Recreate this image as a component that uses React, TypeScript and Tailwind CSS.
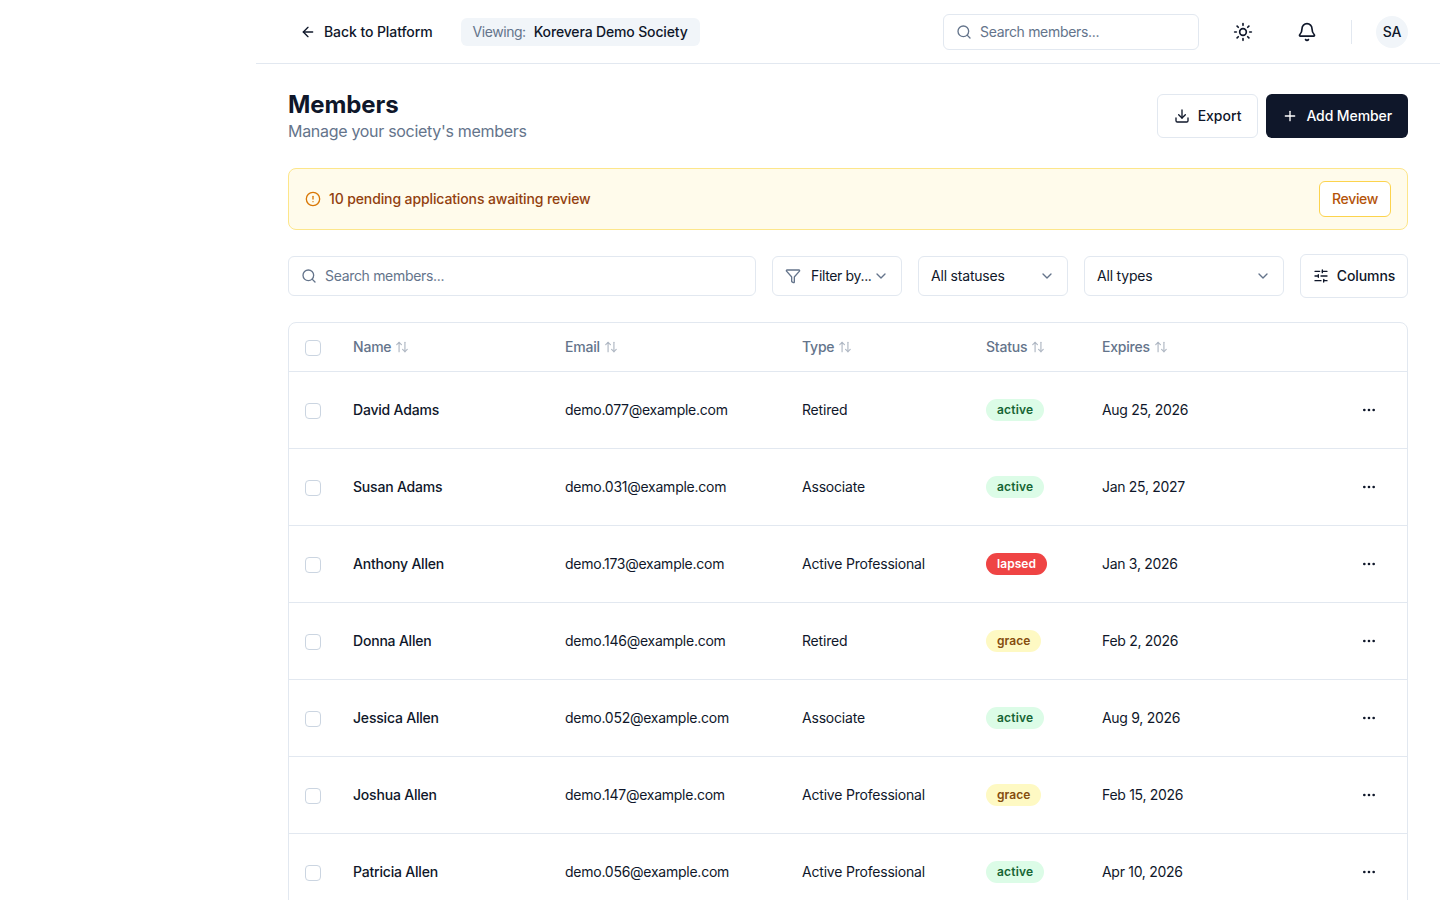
import React from 'react';
import { ArrowLeft, Search, Sun, Bell, Download, Plus, CircleAlert, Funnel, ChevronDown, SlidersHorizontal, ArrowUpDown, Ellipsis } from 'lucide-react';

type Member = { name: string; email: string; type: string; status: 'active' | 'lapsed' | 'grace'; expires: string };

const members: Member[] = [
  { name: 'David Adams', email: 'demo.077@example.com', type: 'Retired', status: 'active', expires: 'Aug 25, 2026' },
  { name: 'Susan Adams', email: 'demo.031@example.com', type: 'Associate', status: 'active', expires: 'Jan 25, 2027' },
  { name: 'Anthony Allen', email: 'demo.173@example.com', type: 'Active Professional', status: 'lapsed', expires: 'Jan 3, 2026' },
  { name: 'Donna Allen', email: 'demo.146@example.com', type: 'Retired', status: 'grace', expires: 'Feb 2, 2026' },
  { name: 'Jessica Allen', email: 'demo.052@example.com', type: 'Associate', status: 'active', expires: 'Aug 9, 2026' },
  { name: 'Joshua Allen', email: 'demo.147@example.com', type: 'Active Professional', status: 'grace', expires: 'Feb 15, 2026' },
  { name: 'Patricia Allen', email: 'demo.056@example.com', type: 'Active Professional', status: 'active', expires: 'Apr 10, 2026' },
];

const statusClass = {
  active: 'bg-[#dcfce7] text-[#166534] tracking-[0.2px]',
  lapsed: 'bg-[#ef4444] text-white tracking-[0.05px]',
  grace: 'bg-[#fef9c3] text-[#854d0e] tracking-[0.05px]',
};

function SortHead({ label }: { label: string }) {
  return (
    <th className="p-0 text-left font-medium text-[#64748b]">
      <span className="flex items-center gap-1">
        {label}
        <ArrowUpDown size={14} className="opacity-50" />
      </span>
    </th>
  );
}

function Checkbox() {
  return <span className="block translate-y-px w-4 h-4 rounded border border-[#cbd5e1]" />;
}

function Select({ label, className }: { label: string; className: string }) {
  return (
    <div className={`h-10 flex items-center justify-between px-3 rounded-md border border-[#e2e8f0] ${className}`}>
      <span>{label}</span>
      <ChevronDown size={16} className="text-[#64748b]" />
    </div>
  );
}

export default function App() {
  return (
    <div className="h-screen overflow-hidden bg-white text-[#0f172a] text-sm tracking-[-0.2px] font-['Inter','Liberation_Sans',sans-serif]">
      <div className="ml-64">
        <header className="h-16 pt-px border-b border-[#e2e8f0] flex items-center pl-[44px] pr-8">
          <div className="flex items-center gap-2 font-medium tracking-[-0.08px]">
            <ArrowLeft size={16} />
            <span>Back to Platform</span>
          </div>
          <div className="ml-7 h-7 px-3 flex items-center gap-2 rounded-md bg-[#f1f5f9]">
            <span className="text-[#64748b] tracking-[-0.45px]">Viewing:</span>
            <span className="font-medium tracking-[-0.15px]">Korevera Demo Society</span>
          </div>
          <div className="ml-auto w-64 h-9 flex items-center gap-2 px-3 rounded-md border border-[#e2e8f0] text-[#64748b] tracking-[-0.32px]">
            <Search size={16} />
            <span>Search members...</span>
          </div>
          <Sun size={20} className="ml-[34px]" />
          <Bell size={20} className="ml-[44px]" />
          <span className="ml-[34px] w-px h-6 bg-[#e2e8f0]" />
          <span className="ml-6 w-8 h-8 rounded-full bg-[#f1f5f9] flex items-center justify-center font-medium">SA</span>
        </header>

        <main className="px-8 pt-[25px]">
          <div className="flex items-start justify-between">
            <div>
              <h1 className="text-2xl leading-8 font-bold tracking-[-0.08px]">Members</h1>
              <p className="text-base leading-6 text-[#64748b] -mt-0.5 tracking-[-0.3px]">Manage your society's members</p>
            </div>
            <div className="flex gap-2 mt-[5px]">
              <div className="h-11 px-4 flex items-center gap-2 rounded-md border border-[#e2e8f0] font-medium tracking-[0px]">
                <Download size={16} />
                Export
              </div>
              <div className="h-11 px-4 flex items-center gap-2 rounded-md bg-[#0f172a] text-white font-medium tracking-[-0.1px]">
                <Plus size={16} />
                Add Member
              </div>
            </div>
          </div>

          <div className="mt-[25px] h-[62px] flex items-center justify-between pl-4 pr-4 rounded-lg border border-[#fde68a] bg-[#fffbeb]">
            <div className="flex items-center gap-2 font-medium text-[#92400e] tracking-[-0.12px]">
              <CircleAlert size={16} className="text-[#d97706]" />
              <span>10 pending applications awaiting review</span>
            </div>
            <div className="h-9 px-3 flex items-center rounded-md border border-[#fcd34d] bg-white font-medium text-[#b45309] tracking-[-0.35px]">Review</div>
          </div>

          <div className="mt-6 flex items-center gap-4">
            <div className="flex-1 h-10 flex items-center gap-2 px-3 rounded-md border border-[#e2e8f0] text-[#64748b] tracking-[-0.32px]">
              <Search size={16} />
              <span>Search members...</span>
            </div>
            <div className="w-[130px] h-10 flex items-center px-3 rounded-md border border-[#e2e8f0] tracking-[-0.35px]">
              <Funnel size={16} className="text-[#64748b] mr-2.5" />
              <span className="flex-1 truncate">Filter by...</span>
              <ChevronDown size={16} className="text-[#64748b]" />
            </div>
            <Select label="All statuses" className="w-[150px]" />
            <Select label="All types" className="w-[200px]" />
            <div className="w-[108px] h-11 flex items-center justify-center gap-2 rounded-md border border-[#e2e8f0] font-medium tracking-[-0.1px]">
              <SlidersHorizontal size={16} />
              Columns
            </div>
          </div>

          <div className="mt-6 rounded-lg border border-[#e2e8f0] overflow-hidden">
            <table className="w-full table-fixed border-collapse">
              <colgroup>
                <col className="w-16" />
                <col className="w-[212px]" />
                <col className="w-[237px]" />
                <col className="w-[184px]" />
                <col className="w-[116px]" />
                <col />
                <col className="w-[78px]" />
              </colgroup>
              <thead>
                <tr className="h-[48px] border-b border-[#e2e8f0]">
                  <th className="p-0 pl-4"><Checkbox /></th>
                  <SortHead label="Name" />
                  <SortHead label="Email" />
                  <SortHead label="Type" />
                  <SortHead label="Status" />
                  <SortHead label="Expires" />
                  <th className="p-0" />
                </tr>
              </thead>
              <tbody>
                {members.map((m) => (
                  <tr key={m.email} className="h-[77px] border-b border-[#e2e8f0]">
                    <td className="p-0 pl-4"><Checkbox /></td>
                    <td className="p-0 font-medium">{m.name}</td>
                    <td className="p-0 tracking-[-0.25px]">{m.email}</td>
                    <td className="p-0">{m.type}</td>
                    <td className="p-0">
                      <span className={`inline-block h-[22px] leading-[22px] px-[11px] rounded-full text-xs font-semibold ${statusClass[m.status]}`}>{m.status}</span>
                    </td>
                    <td className="p-0 tracking-[-0.3px]">{m.expires}</td>
                    <td className="p-0"><Ellipsis size={16} className="ml-[32px]" /></td>
                  </tr>
                ))}
              </tbody>
            </table>
          </div>
        </main>
      </div>
    </div>
  );
}
